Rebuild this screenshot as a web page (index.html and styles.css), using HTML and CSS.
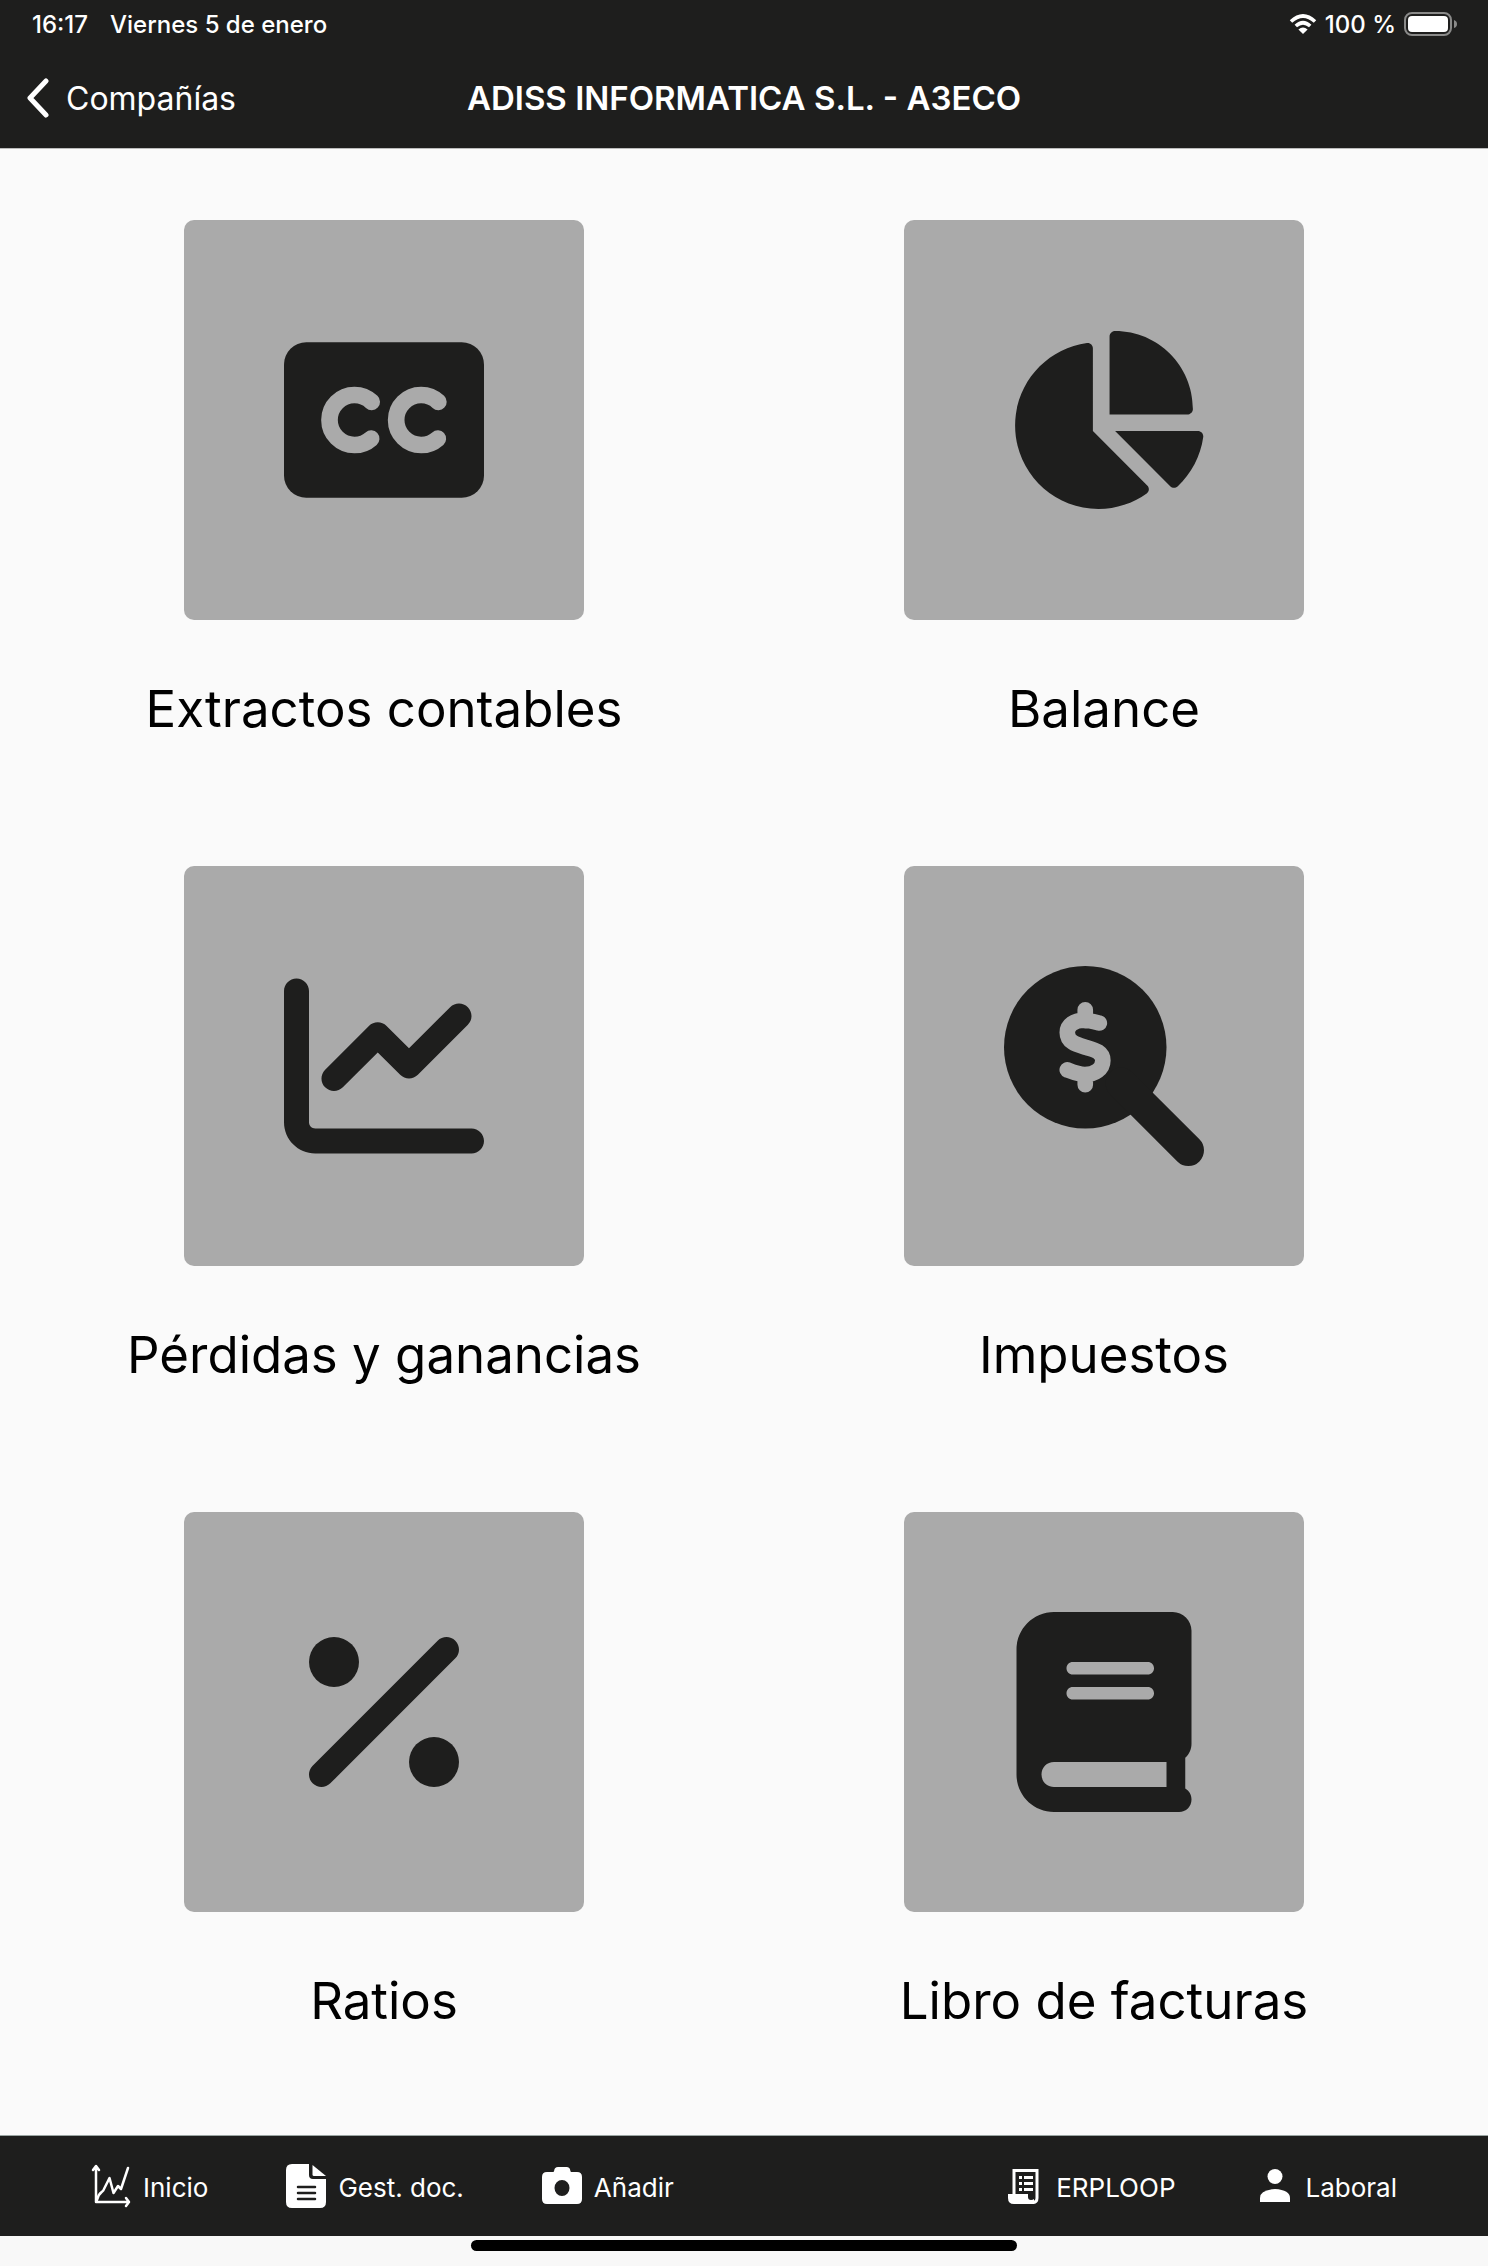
FILE: index.html
```html
<!DOCTYPE html>
<html lang="es">
<head>
<title>ADISS INFORMATICA S.L. - A3ECO</title>
<meta name="viewport" content="width=device-width, initial-scale=1" />
<meta charset="utf-8" />
<link rel="stylesheet" href="styles.css">
</head>
<body>
<header class="top">
	<div class="status">
		<span>16:17</span>
		<span>Viernes 5 de enero</span>
		<div class="status-right">
			<svg class="wifi" viewBox="0 0 28 20" aria-hidden="true">
				<path d="M2 7.500Q14-3.500 26 7.500M6.800 12Q14 5.500 21.200 12" fill="none" stroke="#fff" stroke-width="3.600"/>
				<path d="M14 20l-4.600-4.600q4.600-3.800 9.200 0z" fill="#fff"/>
			</svg>
			<span>100 %</span>
			<svg class="battery" viewBox="0 0 54 24" aria-hidden="true">
				<rect x="1" y="1" width="46" height="22" rx="7" fill="none" stroke="#8a8a89" stroke-width="2"/>
				<rect x="4" y="4" width="40" height="16" rx="4" fill="#fff"/>
				<path d="M50 8q3 1 3 4t-3 4z" fill="#8a8a89"/>
			</svg>
		</div>
	</div>
	<div class="navbar">
		<button class="back" type="button">
			<svg viewBox="0 0 24 40" aria-hidden="true"><path d="M20 3L4 20l16 17" fill="none" stroke="#fff" stroke-width="5" stroke-linecap="round" stroke-linejoin="round"/></svg>
			Compañías
		</button>
		<h1>ADISS INFORMATICA S.L. - A3ECO</h1>
	</div>
</header>

<main class="grid">
	<a class="card" href="#extractos">
		<span class="tile">
			<svg viewBox="0 0 576 512" aria-hidden="true">
				<rect y="32" width="576" height="448" rx="64"/>
				<g class="cut" stroke-width="48">
					<circle cx="203" cy="256" r="72" pathLength="360" stroke-dasharray="264 96" stroke-dashoffset="-48"/>
					<circle cx="395" cy="256" r="72" pathLength="360" stroke-dasharray="264 96" stroke-dashoffset="-48"/>
				</g>
			</svg>
		</span>
		<span class="label">Extractos contables</span>
	</a>
	<a class="card" href="#balance">
		<span class="tile">
			<svg viewBox="0 0 576 512" aria-hidden="true">
				<path d="M304 240V16.600c0-9 7-16.600 16-16.600C443.700 0 544 100.300 544 224c0 9-7.600 16-16.600 16H304zM32 272C32 150.700 122.100 50.300 239 34.300c9.200-1.300 17 6.100 17 15.400V288L412.500 444.500c6.700 6.700 6.200 17.700-1.500 23.100C371.800 495.600 323.800 512 272 512C139.500 512 32 404.600 32 272zm526.400 16c9.300 0 16.600 7.800 15.400 17c-7.700 55.900-34.600 105.600-73.900 142.300c-6 5.600-15.400 5.200-21.200-.7L320 288H558.400z"/>
			</svg>
		</span>
		<span class="label">Balance</span>
	</a>
	<a class="card" href="#perdidas">
		<span class="tile">
			<svg viewBox="0 0 512 512" aria-hidden="true">
				<path d="M64 64c0-17.700-14.300-32-32-32S0 46.300 0 64V400c0 44.200 35.800 80 80 80H480c17.700 0 32-14.300 32-32s-14.300-32-32-32H80c-8.800 0-16-7.200-16-16V64zm406.600 86.600c12.500-12.500 12.500-32.800 0-45.300s-32.800-12.500-45.300 0L320 210.700l-57.400-57.400c-12.500-12.500-32.800-12.500-45.300 0l-112 112c-12.500 12.500-12.500 32.800 0 45.300s32.800 12.500 45.300 0L240 221.300l57.400 57.400c12.500 12.500 32.800 12.500 45.300 0l128-128z"/>
			</svg>
		</span>
		<span class="label">Pérdidas y ganancias</span>
	</a>
	<a class="card" href="#impuestos">
		<span class="tile">
			<svg viewBox="0 0 512 512" aria-hidden="true">
				<circle cx="208" cy="208" r="208"/>
				<path d="M300 300L472 472" stroke="#1e1e1d" stroke-width="80" stroke-linecap="round"/>
				<path class="cut" stroke-width="40" d="M244 146C228 142 217 139 204 139C180 139 162 151 162 170C162 196 188 202 208 208S253 218 253 242C253 264 232 278 207 278C192 278 175 271 162 266M208 112V140M208 278V304"/>
			</svg>
		</span>
		<span class="label">Impuestos</span>
	</a>
	<a class="card" href="#ratios">
		<span class="tile">
			<svg viewBox="0 0 384 512" aria-hidden="true">
				<path d="M374.600 118.600c12.500-12.500 12.500-32.800 0-45.300s-32.800-12.500-45.300 0l-320 320c-12.500 12.500-12.500 32.800 0 45.300s32.800 12.500 45.300 0l320-320z"/>
				<circle cx="64" cy="128" r="64"/>
				<circle cx="320" cy="384" r="64"/>
			</svg>
		</span>
		<span class="label">Ratios</span>
	</a>
	<a class="card" href="#libro">
		<span class="tile">
			<svg viewBox="0 0 448 512" aria-hidden="true">
				<path fill-rule="evenodd" d="M96 0C43 0 0 43 0 96v320c0 53 43 96 96 96h320c18 0 32-14 32-32 0-12-6-22-16-28v-79c10-9 16-22 16-36V48c0-26-22-48-48-48zM96 384h288v64H96c-18 0-32-14-32-32s14-32 32-32zM144 128h192c9 0 16 7 16 16s-7 16-16 16H144c-9 0-16-7-16-16s7-16 16-16zM144 192h192c9 0 16 7 16 16s-7 16-16 16H144c-9 0-16-7-16-16s7-16 16-16z"/>
			</svg>
		</span>
		<span class="label">Libro de facturas</span>
	</a>
</main>

<nav class="tabs">
	<a href="#inicio">
		<svg viewBox="0 0 40 44" aria-hidden="true">
			<g fill="none" stroke="#fff" stroke-width="2.500" stroke-linecap="round" stroke-linejoin="round">
				<path d="M5 3v35h33M2 6l3-4 3 4M35 34l3 4-3 4"/>
				<path d="M6 36C8 27 12 29 13 25L18.500 14l4 15 4.500-7 3 3 7-21"/>
			</g>
		</svg>
		Inicio
	</a>
	<a href="#documentos">
		<svg viewBox="0 0 40 44" aria-hidden="true">
			<path fill="#fff" d="M6 0h17v11q0 4 4 4h13v23q0 6-6 6H6q-6 0-6-6V6q0-6 6-6z"/>
			<path fill="#fff" d="M26.500 1L40 12H28q-1.500 0-1.500-1.500z"/>
			<path d="M12 23h17M12 29h17M12 35h17" stroke="#1e1e1d" stroke-width="2.500" stroke-linecap="round"/>
		</svg>
		Gest. doc.
	</a>
	<a href="#anadir">
		<svg viewBox="0 0 40 44" aria-hidden="true">
			<path fill="#fff" fill-rule="evenodd" d="M5 8h6q1 0 1.200-1.500Q12.500 3 16 3h8.500q3.500 0 3.800 3.500Q28.500 8 29.500 8H35q5 0 5 5v22q0 5-5 5H5q-5 0-5-5V13q0-5 5-5zM20 16a7.500 8 0 1 0 0 16a7.500 8 0 1 0 0-16z"/>
		</svg>
		Añadir
	</a>
	<a class="push" href="#erploop">
		<svg viewBox="-3 0 40 44" aria-hidden="true">
			<path d="M7 30V6.500h23V34q0 4.500-4.500 4.500H8" fill="none" stroke="#fff" stroke-width="3"/>
			<path fill="#fff" d="M1 30h20v3q0 3 3 3 2 0 3-1v5H7q-6 0-6-6z"/>
			<path fill="#fff" d="M12 12h3v3h-3zM17 12h9v3h-9zM12 18h3v3h-3zM17 18h9v3h-9zM12 24h3v3h-3zM17 24h9v3h-9z"/>
		</svg>
		ERPLOOP
	</a>
	<a href="#laboral">
		<svg viewBox="-3 0 40 44" aria-hidden="true">
			<circle cx="18" cy="12.500" r="7.500" fill="#fff"/>
			<path fill="#fff" d="M3 34Q3 26 18 25q15 1 15 9v4H3z"/>
		</svg>
		Laboral
	</a>
</nav>
<div class="home"></div>
</body>
</html>
```

FILE: styles.css
```css
* {
	box-sizing: border-box;
}
body {
	font-family: Inter, "Liberation Sans", Arial, sans-serif;
	margin: 0;
	min-height: 100vh;
	display: flex;
	flex-direction: column;
	background: #fafafa;
	color: #000;
}
svg {
	display: block;
	flex: none;
}
a {
	color: inherit;
	text-decoration: none;
}

/* header */
.top {
	background: #1e1e1d;
	color: #fff;
	border-bottom: 1px solid #bbb;
}
.status {
	display: flex;
	align-items: center;
	gap: 22px;
	height: 48px;
	padding: 0 30px 0 32px;
	font-size: 24px;
	font-weight: 500;
}
.status-right {
	display: flex;
	align-items: center;
	gap: 8px;
	margin-left: auto;
}
.wifi {
	width: 28px;
	height: 20px;
}
.battery {
	width: 54px;
	height: 24px;
}
.navbar {
	display: grid;
	grid-template-columns: 1fr auto 1fr;
	align-items: center;
	height: 100px;
	padding: 0 26px;
}
.back {
	display: flex;
	align-items: center;
	gap: 16px;
	justify-self: start;
	border: none;
	padding: 0;
	background: none;
	color: inherit;
	font-family: inherit;
	font-size: 32px;
}
.back svg {
	width: 24px;
	height: 40px;
}
h1 {
	margin: 0;
	font-size: 33px;
	font-weight: 600;
}

/* sections */
.grid {
	flex: 1;
	display: grid;
	grid-template-columns: 1fr 1fr;
	align-content: start;
	row-gap: 123px;
	padding: 71px 24px;
}
.card {
	display: flex;
	flex-direction: column;
	align-items: center;
	gap: 55px;
}
.tile {
	display: flex;
	align-items: center;
	justify-content: center;
	width: 400px;
	max-width: 90%;
	aspect-ratio: 1;
	border-radius: 10px;
	background: #aaa;
}
.tile svg {
	width: 50%;
	height: 50%;
	fill: #1e1e1d;
}
.tile .cut {
	fill: none;
	stroke: #aaa;
	stroke-linecap: round;
}
.label {
	font-size: 51px;
	line-height: 68px;
	text-align: center;
}

/* bottom bar */
.tabs {
	display: flex;
	align-items: center;
	gap: 78px;
	height: 101px;
	padding: 0 91px;
	border-top: 1px solid #9aa5a2;
	background: #1e1e1d;
	color: #fff;
	font-size: 26px;
	line-height: 40px;
}
.tabs a {
	display: flex;
	align-items: flex-end;
	gap: 12px;
}
.tabs svg {
	width: 40px;
	height: 44px;
}
.tabs .push {
	margin-left: auto;
}
.home {
	height: 30px;
	padding-top: 4px;
	background: #f8f8f8;
}
.home::before {
	content: "";
	display: block;
	width: 37%;
	max-width: 546px;
	height: 11px;
	margin: 0 auto;
	border-radius: 6px;
	background: #000;
}
```
